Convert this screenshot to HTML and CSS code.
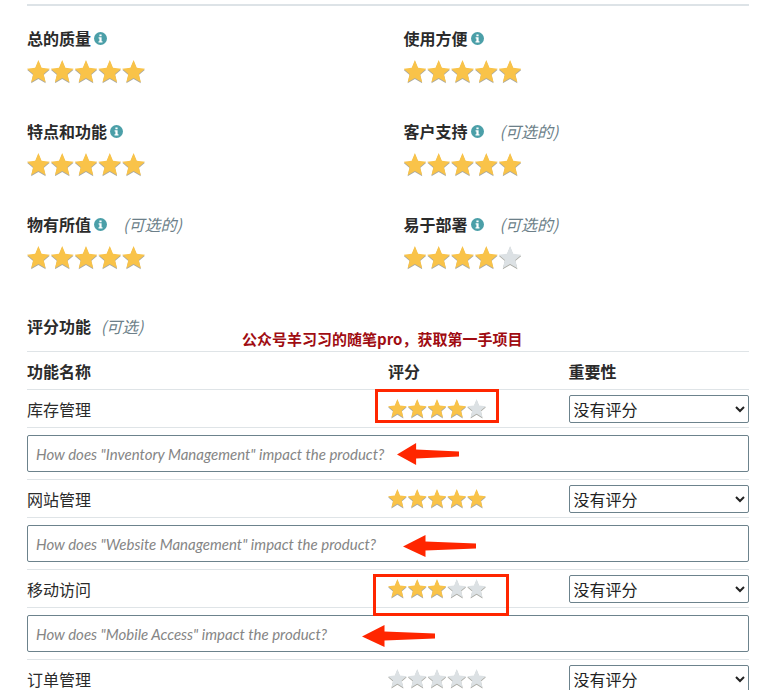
FILE: index.html
```
<!DOCTYPE html>
<html lang="zh-CN">
<head>
  <meta charset="UTF-8">
  <meta name="viewport" content="width=device-width, initial-scale=1.0">
  <title>评分</title>

  <link rel="stylesheet" href="styles.css">
</head>

<body>
  <svg class="sprite" aria-hidden="true">
    <symbol id="info" viewBox="0 0 13 13">
      <circle cx="6.5" cy="6.5" r="6.5" fill="#4b9fa8"/>
      <path d="M5.400 2.400h2.200v1.900H5.400zM4.600 5.300h3v3.900h.9v1.200h-4V9.200h.9V6.500h-.8z" fill="#fff"/>
    </symbol>
    <symbol id="arrow" viewBox="0 0 73 22" preserveAspectRatio="none">
      <path d="M0 11.500L22.500 0v6.500L73 8.500v5L22.500 15.500V22z" fill="#ff2600"/>
    </symbol>
  </svg>

  <form class="review">
    <div class="ratings" id="ratings"></div>

    <h2 class="section-title">评分功能 <em class="optional">(可选)</em></h2>

    <table class="features">
      <thead>
        <tr>
          <th class="col-name">功能名称</th>
          <th>评分</th>
          <th>重要性</th>
        </tr>
      </thead>
      <tbody id="features"></tbody>
    </table>

    <p class="watermark">公众号羊习习的随笔pro，获取第一手项目</p>
  </form>

  <script>
    const ratings = [
      { name: '总的质量', stars: 5 },
      { name: '使用方便', stars: 5 },
      { name: '特点和功能', stars: 5 },
      { name: '客户支持', stars: 5, optional: true },
      { name: '物有所值', stars: 5, optional: true },
      { name: '易于部署', stars: 4, optional: true }
    ];

    const features = [
      { name: '库存管理', english: 'Inventory Management', stars: 4, box: 'box-inventory', arrow: 'arrow-inventory' },
      { name: '网站管理', english: 'Website Management', stars: 5, arrow: 'arrow-website' },
      { name: '移动访问', english: 'Mobile Access', stars: 3, box: 'box-mobile', arrow: 'arrow-mobile' },
      { name: '订单管理', stars: 0 }
    ];

    function starInputs(group, label, count, size) {
      let html = `<div class="stars ${size}" role="radiogroup" aria-label="${label}">`;
      for (let i = 1; i <= 5; i++) {
        html += `<input type="radio" name="${group}" value="${i}" aria-label="${i}"${i === count ? ' checked' : ''}>`;
      }
      return html + '</div>';
    }

    document.getElementById('ratings').innerHTML = ratings.map((item, i) => `
      <div class="rating">
        <div class="rating-label">
          <span>${item.name}</span>
          <button type="button" class="info" aria-label="${item.name}"><svg><use href="#info"/></svg></button>
          ${item.optional ? '<em class="optional">(可选的)</em>' : ''}
        </div>
        ${starInputs('rating-' + i, item.name, item.stars, 'large')}
      </div>`).join('');

    document.getElementById('features').innerHTML = features.map((item, i) => `
      <tr class="feature-row">
        <td><label for="importance-${i}">${item.name}</label></td>
        <td>
          ${starInputs('feature-' + i, item.name, item.stars, 'small')}
          ${item.box ? `<span class="box ${item.box}"></span>` : ''}
        </td>
        <td><select id="importance-${i}"><option>没有评分</option></select></td>
      </tr>
      ${item.english ? `
      <tr class="comment-row">
        <td colspan="3">
          <input type="text" class="comment" aria-label="${item.name}" placeholder='How does "${item.english}" impact the product?'>
          <svg class="arrow ${item.arrow}" aria-hidden="true"><use href="#arrow"/></svg>
        </td>
      </tr>` : ''}`).join('');
  </script>
</body>
</html>
```
FILE: styles.css
```
* {
  box-sizing: border-box;
}

body {
  margin: 0;
  padding: 4px 15px 0 27px;
  background-color: #fff;
  color: #2b2b2b;
  font-family: "Noto Sans CJK SC", sans-serif;
  font-size: 16px;
  line-height: 24px;
}

.sprite {
  display: none;
}

.review {
  position: relative;
  padding-top: 20px;
  border-top: 2px solid #dde3e7;
}

.ratings {
  display: grid;
  grid-template-columns: 1fr 1fr;
  column-gap: 31px;
  row-gap: 36px;
}

.rating {
  display: flex;
  flex-direction: column;
  gap: 10px;
}

.rating-label {
  display: flex;
  align-items: center;
  font-weight: bold;
}

.info {
  width: 13px;
  height: 13px;
  margin-left: 3px;
  padding: 0;
  border: none;
  background: none;
  cursor: pointer;
}

.info svg {
  display: block;
  width: 13px;
  height: 13px;
}

.optional {
  margin-left: 16px;
  color: #6c7f89;
  font-weight: normal;
}

.section-title .optional {
  margin-left: 6px;
}

.stars {
  display: flex;
  gap: 1px;
  filter: drop-shadow(0 1px 0 #a9a9a2);
}

.stars.large {
  width: 118px;
  height: 23px;
}

.stars.small {
  width: 98px;
  height: 19px;
}

.stars input {
  flex: 1;
  min-width: 0;
  margin: 0;
  appearance: none;
  background-color: #dce1e4;
  clip-path: polygon(50% 0, 64% 34%, 100% 38%, 73% 61%, 82% 97%, 50% 78%, 18% 97%, 27% 61%, 0 38%, 36% 34%);
  cursor: pointer;
}

.stars input:checked,
.stars input:has(~ input:checked) {
  background-color: #f9c349;
}

.section-title {
  margin: 45px 0 13px;
  font-size: 16px;
  line-height: 24px;
}

.features {
  width: 100%;
  table-layout: fixed;
  border-spacing: 0;
}

.features th,
.features td {
  position: relative;
  height: 38px;
  padding: 0;
  border-top: 1px solid #dfe4e7;
  text-align: left;
}

.col-name {
  width: 50%;
}

.features .comment-row td {
  height: 52px;
}

.features select {
  display: block;
  width: 100%;
  height: 28px;
  padding: 0;
  border: 1px solid #6c828c;
  border-radius: 2px;
  background-color: #fff;
  color: #222;
  font: inherit;
}

.comment {
  display: block;
  width: 100%;
  height: 37px;
  padding: 0 8px;
  border: 1px solid #6c828c;
  border-radius: 2px;
  font-family: Lato, sans-serif;
  font-size: 15px;
}

.comment::placeholder {
  color: #858585;
  font-style: italic;
}

/* Red marks over the table */
.box {
  position: absolute;
  z-index: 1;
  border: 3px solid #ff2600;
  pointer-events: none;
}

.box-inventory {
  top: -1px;
  left: -13px;
  width: 124px;
  height: 34px;
}

.box-mobile {
  top: 4px;
  left: -15px;
  width: 136px;
  height: 42px;
}

.arrow {
  position: absolute;
  width: 73px;
  height: 22px;
  pointer-events: none;
}

.arrow-inventory {
  top: 15px;
  left: 370px;
  width: 62px;
}

.arrow-website {
  top: 17px;
  left: 376px;
}

.arrow-mobile {
  top: 17px;
  left: 335px;
}

.watermark {
  position: absolute;
  top: 321px;
  left: 215px;
  margin: 0;
  color: #a00c12;
  font-size: 15px;
  font-weight: bold;
}
```
